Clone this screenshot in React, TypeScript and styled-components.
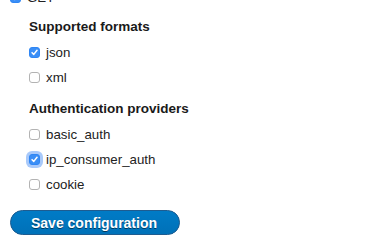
import React from 'react';
import styled, { createGlobalStyle } from 'styled-components';

const GlobalStyle = createGlobalStyle`
  html, body {
    margin: 0;
    padding: 0;
    background: #fff;
    overflow: hidden;
  }
  body {
    font-family: "Liberation Sans", Arial, sans-serif;
    font-size: 13px;
    color: #222;
  }
`;

const Form = styled.form`
  display: flex;
  flex-direction: column;
  align-items: flex-start;
  padding: 0 10px;
  margin-top: -15px;
`;

const Fieldset = styled.div`
  display: flex;
  flex-direction: column;
  margin-left: 19px;
`;

const Legend = styled.div<{ $first?: boolean }>`
  font-weight: 700;
  font-size: 13.5px;
  line-height: 20px;
  margin-top: ${(p) => (p.$first ? '7px' : '9px')};
  margin-bottom: 3px;
  color: #1a1a1a;
`;

const Row = styled.label`
  display: flex;
  align-items: center;
  height: 25px;
  gap: 6px;
  font-size: 13.3px;
  color: #222;
`;

const Box = styled.span<{ $checked?: boolean; $focused?: boolean }>`
  width: 11px;
  height: 11px;
  box-sizing: border-box;
  border-radius: 3px;
  border: 1px solid ${(p) => (p.$checked ? '#2f86f4' : '#b3b3b3')};
  background: ${(p) => (p.$checked ? '#3a8ef6' : '#fff')};
  box-shadow: ${(p) =>
    p.$focused ? '0 0 0 3px rgba(96, 157, 246, 0.55)' : 'none'};
  display: flex;
  align-items: center;
  justify-content: center;
  flex-shrink: 0;

  svg {
    width: 9px;
    height: 9px;
  }
`;

const SaveButton = styled.button`
  margin-top: 13px;
  height: 25px;
  padding: 0 22px 0 20px;
  border-radius: 20em;
  border: 1px solid #1e5c90;
  background-color: #0071b8;
  background-image: linear-gradient(to bottom, #007bc6, #0071b8);
  color: #fff;
  font-family: "Liberation Sans", Arial, sans-serif;
  font-weight: 700;
  font-size: 14px;
  text-shadow: 0 1px rgba(0, 0, 0, 0.5);
  cursor: pointer;
`;

const Check = () => (
  <svg viewBox="0 0 10 10">
    <path
      d="M2.3 5.2 L4.2 7.1 L7.8 2.6"
      fill="none"
      stroke="#fff"
      strokeWidth="1.7"
      strokeLinecap="round"
      strokeLinejoin="round"
    />
  </svg>
);

interface OptionProps {
  label: string;
  checked?: boolean;
  focused?: boolean;
}

const Option: React.FC<OptionProps> = ({ label, checked, focused }) => (
  <Row>
    <Box $checked={checked} $focused={focused}>
      {checked && <Check />}
    </Box>
    {label}
  </Row>
);

const App: React.FC = () => {
  return (
    <>
      <GlobalStyle />
      <Form onSubmit={(e) => e.preventDefault()}>
        <Option label="GET" checked />
        <Fieldset>
          <Legend $first>Supported formats</Legend>
          <Option label="json" checked />
          <Option label="xml" />
          <Legend>Authentication providers</Legend>
          <Option label="basic_auth" />
          <Option label="ip_consumer_auth" checked focused />
          <Option label="cookie" />
        </Fieldset>
        <SaveButton type="submit">Save configuration</SaveButton>
      </Form>
    </>
  );
};

export default App;
